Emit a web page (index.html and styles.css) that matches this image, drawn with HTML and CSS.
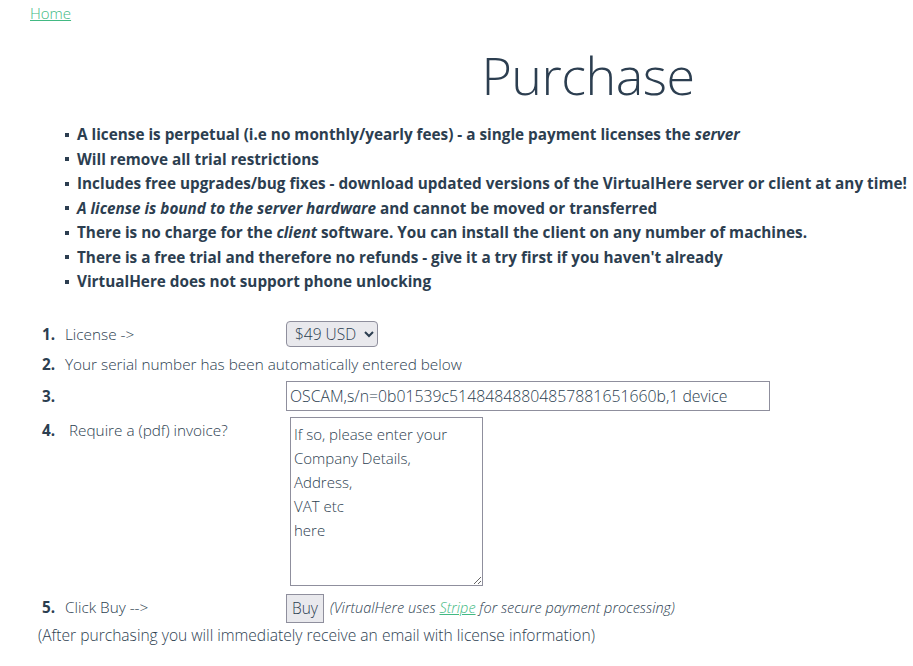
FILE: index.html
```html
<!DOCTYPE html>
<html lang="en">
<head>
<meta charset="utf-8">
<title>Purchase</title>
<link rel="stylesheet" href="styles.css">
</head>
<body>
<div class="page">
  <nav class="nav"><a class="link" href="#">Home</a></nav>
  <h1 class="title">Purchase</h1>
  <ul class="features">
    <li>A license is perpetual (i.e no monthly/yearly fees) - a single payment licenses the <em>server</em></li>
    <li>Will remove all trial restrictions</li>
    <li>Includes free upgrades/bug fixes - download updated versions of the VirtualHere server or client at any time!</li>
    <li><em>A license is bound to the server hardware</em> and cannot be moved or transferred</li>
    <li>There is no charge for the <em>client</em> software. You can install the client on any number of machines.</li>
    <li>There is a free trial and therefore no refunds - give it a try first if you haven't already</li>
    <li>VirtualHere does not support phone unlocking</li>
  </ul>
  <ol class="steps">
    <li class="step">
      <span class="num">1.</span>
      <span class="label">License -&gt;</span>
      <span class="control">
        <select class="select"><option>$49 USD</option></select>
      </span>
    </li>
    <li class="step">
      <span class="num">2.</span>
      <span class="label label-wide">Your serial number has been automatically entered below</span>
    </li>
    <li class="step">
      <span class="num">3.</span>
      <span class="label"></span>
      <span class="control">
        <input class="serial" type="text" value="OSCAM,s/n=0b01539c51484848804857881651660b,1 device">
      </span>
    </li>
    <li class="step step-top">
      <span class="num num-top">4.</span>
      <span class="label label-invoice">Require a (pdf) invoice?</span>
      <span class="control">
        <textarea class="invoice" placeholder="If so, please enter your&#10;Company Details,&#10;Address,&#10;VAT etc&#10;here"></textarea>
      </span>
    </li>
    <li class="step">
      <span class="num">5.</span>
      <span class="label">Click Buy --&gt;</span>
      <span class="control">
        <button class="buy" type="button">Buy</button>
        <span class="stripe">(VirtualHere uses <a class="link" href="#">Stripe</a> for secure payment processing)</span>
      </span>
    </li>
  </ol>
  <p class="note">(After purchasing you will immediately receive an email with license information)</p>
</div>
</body>
</html>
```

FILE: styles.css
```css
html, body {
  margin: 0;
  padding: 0;
  background: #ffffff;
}

.page {
  font-family: "Open Sans", "Noto Sans", sans-serif;
  color: #2c3e50;
  padding: 4px 0 0 30px;
}

.link {
  color: #42b983;
  text-decoration: underline;
}

.nav {
  font-size: 15px;
  font-weight: 300;
  line-height: 18px;
}

.title {
  margin: 23px 0 0 0;
  padding-left: 233px;
  text-align: center;
  font-size: 52px;
  font-weight: 300;
  letter-spacing: -0.5px;
  line-height: 60px;
  color: #2c3e50;
}

.features {
  margin: 17px 0 0 0;
  padding: 0 0 0 47px;
  list-style: none;
  font-size: 15.3px;
  font-weight: 700;
  line-height: 24.5px;
}

.features li::before {
  content: "";
  display: inline-block;
  width: 4px;
  height: 4px;
  background: #2c3e50;
  vertical-align: middle;
  margin: 0 8px 2px -12px;
}

.steps {
  list-style: none;
  margin: 27px 0 0 0;
  padding: 0;
  display: flex;
  flex-direction: column;
  gap: 6px;
  font-size: 15.3px;
  font-weight: 300;
  color: #2c3e50;
}

.step {
  display: grid;
  grid-template-columns: 35px 221px auto;
  align-items: center;
  min-height: 22px;
}

.step-top {
  align-items: start;
}

.num {
  font-weight: 700;
  padding-left: 12px;
}

.num-top {
  padding-top: 3px;
}

.label-wide {
  grid-column: 2 / 4;
}

.label-invoice {
  padding: 3px 0 0 4px;
}

.control {
  display: flex;
  align-items: center;
}

.select {
  height: 26px;
  font-family: inherit;
  font-size: 15.5px;
  font-weight: 300;
  color: #2c3e50;
  background: #e9e9ed;
  border: 1px solid #8f8f9d;
  border-radius: 4px;
  padding: 0 4px;
}

.serial {
  width: 484px;
  height: 30px;
  box-sizing: border-box;
  font-family: inherit;
  font-size: 15.8px;
  font-weight: 300;
  color: #2c3e50;
  border: 1px solid #8f8f9d;
  padding: 0 3px;
}

.invoice {
  margin-left: 4px;
  width: 193px;
  height: 169px;
  box-sizing: border-box;
  font-family: inherit;
  font-size: 15px;
  font-weight: 300;
  line-height: 24px;
  color: #2c3e50;
  border: 1px solid #8f8f9d;
  padding: 4px 3px;
  resize: both;
}

.invoice::placeholder {
  color: #2c3e50;
  opacity: 1;
}

.buy {
  height: 29px;
  font-family: inherit;
  font-size: 15.5px;
  font-weight: 300;
  color: #2c3e50;
  background: #e9e9ed;
  border: 1px solid #8f8f9d;
  border-radius: 0;
  padding: 0 5px;
  margin-top: 2px;
}

.stripe {
  margin-left: 6px;
  font-style: italic;
  font-size: 14.5px;
  font-weight: 300;
}

.note {
  margin: 1px 0 0 8px;
  font-size: 15.6px;
  font-weight: 300;
}
```
